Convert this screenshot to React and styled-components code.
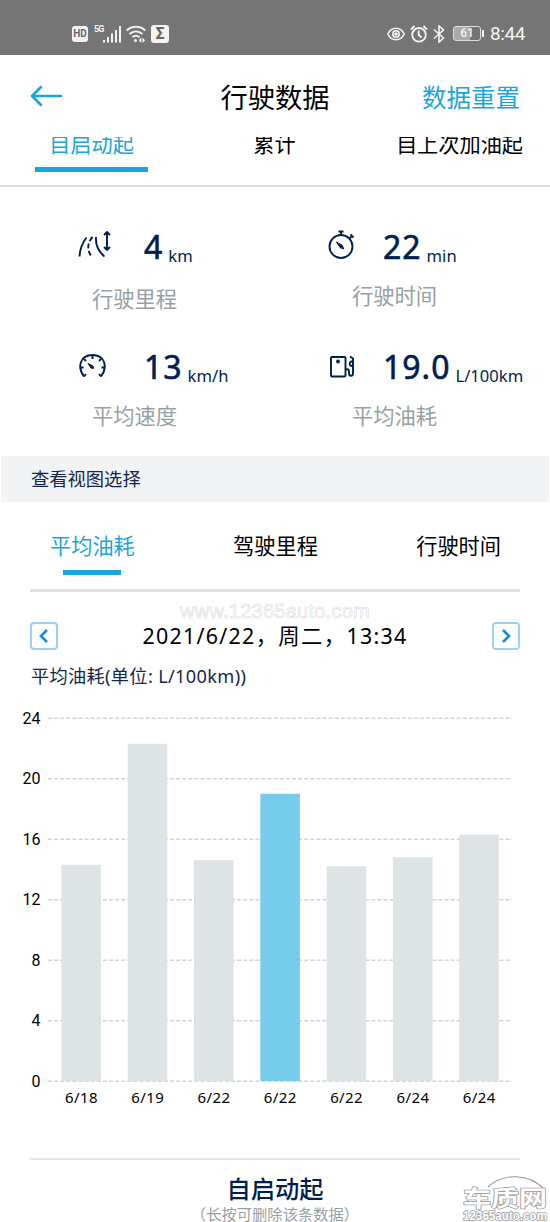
import styled, { createGlobalStyle } from "styled-components";

const TripStats = [
  { icon: RoadIcon, value: "4", unit: "km", label: "行驶里程", iconX: 73, valueX: 139, drop: 3 },
  { icon: StopwatchIcon, value: "22", unit: "min", label: "行驶时间", iconX: 62, valueX: 118, drop: 0 },
  { icon: GaugeIcon, value: "13", unit: "km/h", label: "平均速度", iconX: 73, valueX: 139, drop: 0 },
  { icon: FuelIcon, value: "19.0", unit: "L/100km", label: "平均油耗", iconX: 62, valueX: 118, drop: 0 },
];

const ChartData = [
  { day: "6/18", value: 14.3 },
  { day: "6/19", value: 22.3 },
  { day: "6/22", value: 14.6 },
  { day: "6/22", value: 19, active: true },
  { day: "6/22", value: 14.2 },
  { day: "6/24", value: 14.8 },
  { day: "6/24", value: 16.3 },
];

const Ticks = [24, 20, 16, 12, 8, 4, 0];

function RoadIcon() {
  return (
    <StatSvg viewBox="0 0 36 32">
      <path d="M1.500 27.500C2 19 5 13 8.500 8.500" />
      <path d="M14.500 8C9 14 9 21 13.500 27.500" strokeDasharray="5 2.500" />
      <path d="M18 8C17.500 16 19.500 22 26.500 27.500" />
      <path d="M29 3.500v17M26 6L29 3L32 6M26 18L29 21L32 18" />
    </StatSvg>
  );
}

function StopwatchIcon() {
  return (
    <StatSvg viewBox="0 0 36 32">
      <circle cx="14" cy="17.500" r="11.500" />
      <path d="M14 6V2.500M11.500 2.500h5M22.500 9.500L25 7M23.500 5.500L26.500 8.500" />
      <path d="M9.500 13L13 18.500L16.500 20L15.500 16.500Z" fill="#001e50" strokeWidth="1" />
    </StatSvg>
  );
}

function GaugeIcon() {
  return (
    <StatSvg viewBox="0 0 36 32">
      <path d="M6 27.500C-1 18 2 6 14.500 6S30 18 23 27.500" />
      <path d="M14.500 6v4M6 10l2 2M23 10l-2 2M2 18.500h3.500M27 18.500h-3.500M6 27.500l2-2.500M23 27.500l-2-2.500" />
      <path d="M10 14.500L13 19L15.500 19.500L15 17Z" fill="#001e50" strokeWidth="1" />
    </StatSvg>
  );
}

function FuelIcon() {
  return (
    <StatSvg viewBox="0 0 36 32">
      <rect x="4" y="8" width="14.500" height="19.500" rx="1" />
      <circle cx="11" cy="12.500" r="1" fill="#001e50" />
      <path d="M19 20.500c3-1 3 1 3 4s4 3 4 0V9.500l-3-2M26 12.500h-1.500c-2.500 0-2.500 4.500 .5 4.500h1" />
    </StatSvg>
  );
}

function StatusBar() {
  return (
    <StatusRow>
      <StatusGroup>
        <Badge $w={16} $size={10}>HD</Badge>
        <Signal>
          <Network>5G</Network>
          <svg width="18" height="18" viewBox="0 0 18 18" fill="#f4f4f4">
            <rect x="0" y="15" width="2" height="2.500" />
            <rect x="4" y="12" width="2" height="5.500" />
            <rect x="8" y="8.500" width="2" height="9" />
            <rect x="12" y="5" width="2" height="12.500" />
            <rect x="16" y="1" width="2" height="16.500" />
          </svg>
        </Signal>
        <svg width="20" height="18" viewBox="0 0 20 18" fill="none" stroke="#f4f4f4" strokeWidth="1.900">
          <path d="M.7 5.500C6 .5 14 .5 19.300 5.500M3.500 9c4-3.500 9-3.500 13 0M6.500 12.200c2.200-1.800 4.800-1.800 7 0" />
          <circle cx="9.500" cy="15.500" r="1.500" fill="#f4f4f4" stroke="none" />
          <path d="M15.300 12.500L12.800 15.200L15.300 17.900ZM16.500 12.500L19 15.200L16.500 17.900Z" fill="#f4f4f4" stroke="none" />
        </svg>
        <Badge $w={18} $size={16}>Σ</Badge>
      </StatusGroup>
      <StatusGroup>
        <svg width="18" height="16" viewBox="0 0 18 16" fill="none" stroke="#f4f4f4" strokeWidth="1.600">
          <path d="M.8 8C4.500.3 13.500.3 17.200 8C13.500 15.700 4.500 15.700.8 8Z" />
          <circle cx="9" cy="8" r="3.200" />
          <circle cx="9" cy="8" r="1.800" fill="#f4f4f4" stroke="none" />
        </svg>
        <svg width="18" height="18" viewBox="0 0 18 18" fill="none" stroke="#f4f4f4" strokeWidth="1.800">
          <circle cx="9" cy="9.800" r="6.800" />
          <path d="M8.700 5.500v4.500l3 2.500M1 4.500L4.500 1M17 4.500L13.500 1" />
        </svg>
        <svg width="12" height="18" viewBox="0 0 12 18" fill="none" stroke="#f4f4f4" strokeWidth="1.600">
          <path d="M1 4.500l9.500 8.500L6 17V1l4.500 4L1 13.500" />
        </svg>
        <Battery>61</Battery>
        <Clock>8:44</Clock>
      </StatusGroup>
    </StatusRow>
  );
}

function FuelChart() {
  const y = (value) => 381 - value * 15.12;
  return (
    <ChartSvg width="550" height="410" viewBox="0 0 550 410">
      {Ticks.map((tick) => (
        <g key={tick}>
          <path d={`M48 ${y(tick) + 0.2}H512`} stroke="#d3d4d5" strokeWidth="1.500" strokeDasharray="4 2.100" />
          <TickText x="40.500" y={y(tick) + 5.5}>{tick}</TickText>
        </g>
      ))}
      {ChartData.map((item, idx) => (
        <g key={idx}>
          <rect
            x={61.400 + idx * 66.300}
            y={y(item.value)}
            width="39.600"
            height={item.value * 15.12}
            fill={item.active ? "#77ccec" : "#dee3e6"}
          />
          <DayText x={81.400 + idx * 66.300} y="402.500">{item.day}</DayText>
        </g>
      ))}
    </ChartSvg>
  );
}

function App() {
  return (
    <Screen>
      <GlobalStyle />
      <StatusBar />
      <Header>
        <BackButton aria-label="返回">
          <svg width="33" height="22" viewBox="0 0 33 22" fill="none" stroke="#1aa5dc" strokeWidth="2.600" strokeLinecap="round" strokeLinejoin="round">
            <path d="M31 11H2M11 2L2 11L11 20" />
          </svg>
        </BackButton>
        <Title>行驶数据</Title>
        <ResetButton>数据重置</ResetButton>
      </Header>
      <PeriodTabs>
        <PeriodTab $active>自启动起</PeriodTab>
        <PeriodTab>累计</PeriodTab>
        <PeriodTab>自上次加油起</PeriodTab>
      </PeriodTabs>
      <StatsGrid>
        {TripStats.map((item) => (
          <Stat key={item.label}>
            <Reading $iconX={item.iconX} $valueX={item.valueX}>
              <item.icon />
              <Value>{item.value}</Value>
              <Unit>{item.unit}</Unit>
            </Reading>
            <StatLabel $drop={item.drop}>{item.label}</StatLabel>
          </Stat>
        ))}
      </StatsGrid>
      <SectionBar>查看视图选择</SectionBar>
      <ViewTabs>
        <ViewTab $active>平均油耗</ViewTab>
        <ViewTab>驾驶里程</ViewTab>
        <ViewTab>行驶时间</ViewTab>
      </ViewTabs>
      <DateRow>
        <SiteMark>www.12365auto.com</SiteMark>
        <StepButton aria-label="上一条">
          <svg width="10" height="16" viewBox="0 0 10 16"><path d="M8 2L2 8L8 14" /></svg>
        </StepButton>
        <DateText>2021/6/22，周二，13:34</DateText>
        <StepButton aria-label="下一条">
          <svg width="10" height="16" viewBox="0 0 10 16"><path d="M2 2L8 8L2 14" /></svg>
        </StepButton>
      </DateRow>
      <ChartTitle>平均油耗(单位: L/100km))</ChartTitle>
      <FuelChart />
      <Footer>
        <FooterTitle>自启动起</FooterTitle>
        <FooterHint>（长按可删除该条数据）</FooterHint>
      </Footer>
      <CornerMark width="90" height="50" viewBox="0 0 90 50">
        <path d="M27 11C42-3 68-3 83 13" fill="none" stroke="#999" strokeWidth="1.200" />
        <MarkText x="2" y="30" $size={22} textLength="84" lengthAdjust="spacingAndGlyphs">车质网</MarkText>
        <MarkText x="2" y="44" $size={12} textLength="84" lengthAdjust="spacingAndGlyphs">12365auto.com</MarkText>
      </CornerMark>
    </Screen>
  );
}

export default App;

const GlobalStyle = createGlobalStyle`
  * {
    box-sizing: border-box;
  }

  body {
    margin: 0;
    background: #fff;
    font-family: "Noto Sans", "Noto Sans CJK SC", sans-serif;
  }

  button {
    padding: 0;
    border: 0;
    background: none;
    font-family: inherit;
  }
`;

const Screen = styled.main`
  position: relative;
  width: 550px;
  height: 1222px;
  overflow: hidden;
  background: #fff;
`;

const StatusRow = styled.div`
  display: flex;
  justify-content: space-between;
  height: 55px;
  padding: 12px 25px 0 72px;
  background: #757575;
  color: #f4f4f4;
`;

const StatusGroup = styled.div`
  display: flex;
  align-items: center;
  gap: 5px;
`;

const Badge = styled.span`
  width: ${(props) => props.$w}px;
  height: ${(props) => props.$w}px;
  border-radius: 3px;
  background: #f4f4f4;
  color: #666;
  font: 700 ${(props) => props.$size}px/${(props) => props.$w}px Roboto, sans-serif;
  text-align: center;
`;

const Signal = styled.div`
  display: flex;
  align-items: flex-start;
  margin-left: 1px;
`;

const Network = styled.span`
  width: 9px;
  font: 700 9px/9px "Roboto", sans-serif;
  letter-spacing: -0.8px;
`;

const Battery = styled.span`
  position: relative;
  width: 28px;
  height: 15px;
  margin: 0 4px 0 3px;
  border: 1px solid #ddd;
  border-radius: 3px;
  background: linear-gradient(90deg, #aaa 60%, #757575 60%);
  font: 500 12px/13px Roboto, sans-serif;
  text-align: center;

  &::after {
    content: "";
    position: absolute;
    right: -4px;
    top: 3px;
    width: 2px;
    height: 7px;
    background: #f4f4f4;
  }
`;

const Clock = styled.span`
  font: 400 19px/20px Roboto, sans-serif;
  letter-spacing: -0.4px;
`;

const Header = styled.header`
  display: grid;
  grid-template-columns: 1fr auto 1fr;
  align-items: center;
  height: 82px;
  padding: 4px 30px 0;
`;

const BackButton = styled.button`
  justify-self: start;
  height: 22px;
  margin-top: -4px;
`;

const Title = styled.h1`
  margin: 0;
  font-size: 27.3px;
  font-weight: 400;
  line-height: 40px;
`;

const ResetButton = styled.button`
  justify-self: end;
  color: #1aa5dc;
  font-size: 24.5px;
  line-height: 40px;
`;

const PeriodTabs = styled.nav`
  display: grid;
  grid-template-columns: 113px 1fr 129px;
  justify-items: center;
  column-gap: 68px;
  height: 50px;
  padding: 0 26px 0 35px;
  overflow: hidden;
  border-bottom: 2px solid #dcdedf;

  & > :nth-child(2) {
    margin-left: -20px;
    margin-right: -26px;
  }
`;

const PeriodTab = styled.button`
  justify-self: stretch;
  height: 44px;
  margin-top: -9px;
  padding: 1px 0 8px;
  border-bottom: 5px solid ${(props) => (props.$active ? "#1aa5dc" : "transparent")};
  color: ${(props) => (props.$active ? "#1aa5dc" : "#000")};
  font-size: 21.2px;
  line-height: 30px;
  white-space: nowrap;
`;

const StatsGrid = styled.section`
  display: grid;
  grid-template-columns: 260px 260px;
  grid-auto-rows: 120px;
  height: 269px;
  padding: 36px 0 0 5px;
`;

const Stat = styled.div`
  display: flex;
  flex-direction: column;
`;

const Reading = styled.div`
  display: flex;
  align-items: baseline;
  height: 57px;
  padding-left: ${(props) => props.$iconX}px;
  color: #001e50;
  white-space: nowrap;

  svg {
    align-self: flex-start;
    margin: 6px ${(props) => props.$valueX - props.$iconX - 36}px 0 0;
  }
`;

const StatSvg = styled.svg`
  flex: none;
  width: 36px;
  height: 32px;
  fill: none;
  stroke: #001e50;
  stroke-width: 1.9;
`;

const Value = styled.strong`
  font-size: 32px;
  font-weight: 400;
  line-height: 48px;
  letter-spacing: 1px;
  -webkit-text-stroke: 0.6px #001e50;
`;

const Unit = styled.span`
  position: relative;
  top: 3px;
  margin-left: 5px;
  font-size: 16.6px;
`;

const StatLabel = styled.div`
  margin-top: ${(props) => props.$drop}px;
  padding-right: 1px;
  color: #989fa5;
  font-size: 21.3px;
  line-height: 32px;
  text-align: center;
`;

const SectionBar = styled.h2`
  height: 46px;
  margin: 0 1px;
  padding-left: 30px;
  background: #f2f3f5;
  color: #14264f;
  font-size: 18.3px;
  font-weight: 400;
  line-height: 46px;
`;

const ViewTabs = styled.nav`
  display: flex;
  justify-content: space-between;
  height: 90px;
  margin: 0 30px;
  padding: 28px 19px 0 20px;
  border-bottom: 3px solid #dde1e4;
`;

const ViewTab = styled.button`
  display: flex;
  flex-direction: column;
  align-items: center;
  color: ${(props) => (props.$active ? "#1aa5dc" : "#000")};
  font-size: 21.2px;
  line-height: 32px;

  &::after {
    content: "";
    width: 58px;
    height: 5px;
    margin-top: 8px;
    background: ${(props) => (props.$active ? "#1aa5dc" : "transparent")};
  }
`;

const DateRow = styled.div`
  position: relative;
  display: flex;
  align-items: center;
  justify-content: space-between;
  height: 60px;
  padding: 28px 30px 0;
`;

const StepButton = styled.button`
  display: flex;
  align-items: center;
  justify-content: center;
  width: 28px;
  height: 28px;
  border: 2px solid #9dd0f3;
  border-radius: 4px;

  path {
    fill: none;
    stroke: #168ddd;
    stroke-width: 2.7;
  }
`;

const DateText = styled.div`
  font-size: 21.4px;
  line-height: 30px;
  letter-spacing: 1.3px;
`;

const SiteMark = styled.span`
  position: absolute;
  left: 180px;
  top: 7px;
  color: #fff;
  font: 400 20px/24px "Liberation Sans", sans-serif;
  letter-spacing: 0.25px;
  -webkit-text-stroke: 0.6px #dadada;
`;

const ChartTitle = styled.h3`
  height: 48px;
  margin: 0;
  padding: 10px 0 0 31px;
  color: #14264f;
  font-size: 18.2px;
  font-weight: 400;
  line-height: 28px;
  letter-spacing: 0.33px;
`;

const ChartSvg = styled.svg`
  display: block;
`;

const TickText = styled.text`
  font: 16px Roboto, sans-serif;
  text-anchor: end;
`;

const DayText = styled.text`
  font-size: 15px;
  letter-spacing: 0.4px;
  text-anchor: middle;
`;

const Footer = styled.footer`
  margin: 48px 30px 0;
  padding-top: 12px;
  border-top: 2px solid #e2e4e5;
  text-align: center;
`;

const FooterTitle = styled.div`
  color: #001e50;
  font-size: 24.3px;
  font-weight: 500;
  line-height: 34px;
`;

const FooterHint = styled.div`
  margin-top: -1px;
  color: #989fa5;
  font-size: 15.3px;
  line-height: 18px;
`;

const CornerMark = styled.svg`
  position: absolute;
  left: 461px;
  top: 1176px;
`;

const MarkText = styled.text`
  fill: #fff;
  stroke: #a0a0a0;
  stroke-width: 1.5px;
  paint-order: stroke;
  font-size: ${(props) => props.$size}px;
  font-weight: 700;
  font-family: "Liberation Sans", "Noto Sans CJK SC", sans-serif;
`;
